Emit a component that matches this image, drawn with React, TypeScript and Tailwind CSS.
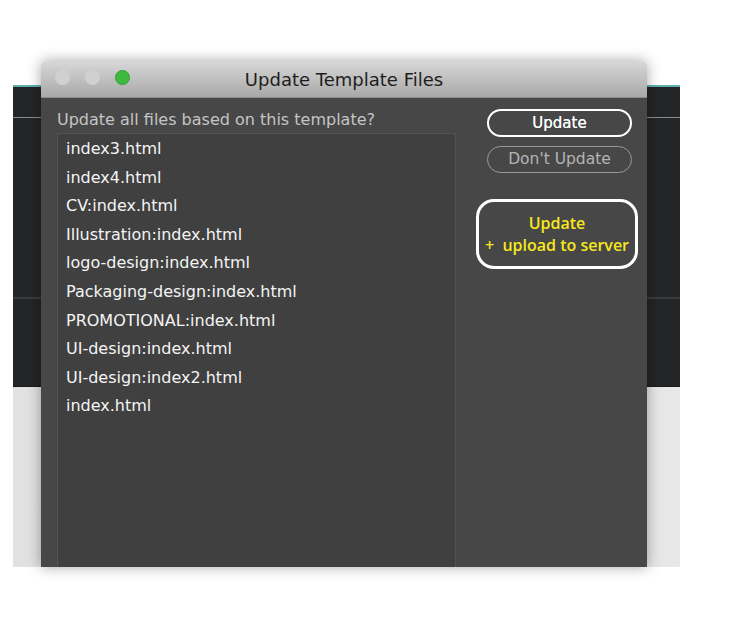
import React from 'react';

const files = [
  'index3.html',
  'index4.html',
  'CV:index.html',
  'Illustration:index.html',
  'logo-design:index.html',
  'Packaging-design:index.html',
  'PROMOTIONAL:index.html',
  'UI-design:index.html',
  'UI-design:index2.html',
  'index.html',
];

export default function App() {
  return (
    <div className="relative w-[734px] h-[623px] bg-white overflow-hidden">
      {/* app window behind the dialog */}
      <div className="ml-[13px] mt-[85px] w-[667px] h-[482px] flex flex-col">
        <div className="h-[2px] bg-[#5fb0aa]" />
        <div className="h-[30px] bg-[#242527]" />
        <div className="h-px bg-[#8a8a8a]" />
        <div className="h-[179px] bg-[#242527]" />
        <div className="h-[2px] bg-[#3b3c3e]" />
        <div className="h-[88px] bg-[#242527] border-b border-dotted border-[#111]" />
        <div className="flex-1 bg-linear-to-r from-[#e2e2e2] via-[#d0d0d0] to-[#e8e8e8]" />
      </div>

      {/* dialog */}
      <div className="absolute left-[41px] top-[61px] w-[606px] h-[506px] flex flex-col rounded-t-[5px] shadow-[0_0_14px_rgba(0,0,0,0.35)]">
        <div className="h-[37px] shrink-0 flex items-center relative rounded-t-[5px] bg-linear-to-b from-[#d8d8d8] to-[#a8a8a8] border-b border-[#8e8e8e]">
          <div className="absolute left-[14px] top-[9px] flex gap-[15px]">
            <span className="w-[15px] h-[15px] rounded-full bg-[#d0d0d0]" />
            <span className="w-[15px] h-[15px] rounded-full bg-[#d0d0d0]" />
            <span className="w-[15px] h-[15px] rounded-full bg-[#3dba3f] border border-[#2fa032]" />
          </div>
          <div className="flex-1 text-center text-[18px] text-[#1e1e1e] [font-family:'DejaVu_Sans',sans-serif]">
            Update Template Files
          </div>
        </div>

        <div className="flex-1 flex bg-[#474747] [font-family:'DejaVu_Sans',sans-serif]">
          <div className="pl-[16px] pt-[12px] flex flex-col">
            <div className="text-[16px] leading-[20px] text-[#c4c4c4] mb-[3px]">
              Update all files based on this template?
            </div>
            <div className="w-[399px] flex-1 bg-[#404040] border-t border-l border-r border-[#525252] pl-[8px] pt-[1px]">
              {files.map((f) => (
                <div key={f} className="h-[28.6px] leading-[28px] text-[16px] text-[#f4f4f4]">
                  {f}
                </div>
              ))}
            </div>
          </div>

          <div className="flex flex-col pt-[11px] pl-[20px]">
            <div className="ml-[11px] w-[145px] h-[28px] rounded-full border-2 border-white flex items-center justify-center text-[15px] font-medium text-white [text-shadow:0_0_0.6px_#fff]">
              Update
            </div>
            <div className="ml-[11px] mt-[9px] w-[145px] h-[27px] rounded-full border border-[#9a9a9a] flex items-center justify-center text-[15.5px] text-[#b4b4b4]">
              Don't Update
            </div>
            <div className="mt-[26px] w-[162px] h-[70px] rounded-[18px] border-[3px] border-white flex flex-col items-center justify-center text-[16px] leading-[22px] font-semibold text-[#f6e81c] [font-family:'Open_Sans',sans-serif]">
              <span>Update</span>
              <span>+&nbsp; upload to server</span>
            </div>
          </div>
        </div>
      </div>
    </div>
  );
}
